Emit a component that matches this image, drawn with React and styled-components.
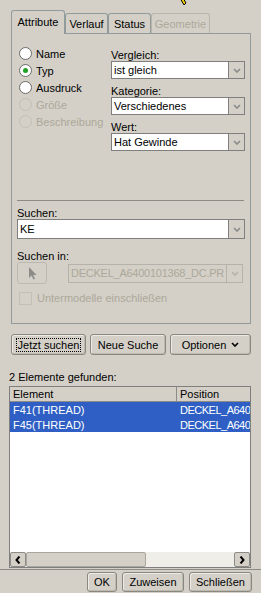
import React from 'react';
import styled, { createGlobalStyle } from 'styled-components';

const BG = '#d4d0c8';
const DIS = '#aca899';

const Global = createGlobalStyle`
  html, body { margin: 0; padding: 0; background: ${BG}; }
  body { font-family: "Liberation Sans", Arial, sans-serif; font-size: 11px; color: #000; }
  * { box-sizing: border-box; }
`;

const Window = styled.div`
  position: relative;
  width: 261px;
  height: 593px;
  background: ${BG};
  overflow: hidden;
  display: flex;
  flex-direction: column;
`;

const CursorMark = styled.svg`
  position: absolute;
  left: 179px;
  top: -2px;
`;

const TabStrip = styled.div`
  display: flex;
  align-items: flex-end;
  height: 23px;
  margin-top: 10px;
  padding-left: 11px;
  position: relative;
  z-index: 1;
`;

const Tab = styled.div`
  width: ${p => p.$w}px;
  height: ${p => (p.$active ? 24 : 20)}px;
  margin-bottom: ${p => (p.$active ? -1 : 0)}px;
  border: 1px solid ${p => (p.$disabled ? '#b9b6ad' : '#919b9c')};
  border-bottom: none;
  border-radius: 3px 3px 0 0;
  background: ${BG};
  color: ${p => (p.$disabled ? DIS : '#000')};
  display: flex;
  align-items: center;
  justify-content: center;
  padding-bottom: ${p => (p.$active ? 2 : 0)}px;
  white-space: nowrap;
`;

const TabPanel = styled.div`
  width: 240px;
  height: 291px;
  margin-left: 11px;
  border: 1px solid #919b9c;
  padding: 11px 5px 0 5px;
  display: flex;
  flex-direction: column;
`;

const TopSection = styled.div`
  display: grid;
  grid-template-columns: 94px 134px;
`;

const RadioList = styled.div`
  display: flex;
  flex-direction: column;
`;

const RadioRow = styled.label`
  height: 17px;
  display: flex;
  align-items: center;
  gap: 4px;
  padding-left: 2px;
  color: ${p => (p.$disabled ? DIS : '#000')};
`;

const RadioCircle = styled.span`
  width: 13px;
  height: 13px;
  border-radius: 50%;
  border: 1px solid ${p => (p.$disabled ? '#c2bfb6' : '#6b6b6b')};
  background: ${p => (p.$disabled ? 'transparent' : '#fff')};
  display: flex;
  align-items: center;
  justify-content: center;
  flex: none;
  &::after {
    content: '';
    display: ${p => (p.$checked ? 'block' : 'none')};
    width: 5px;
    height: 5px;
    border-radius: 50%;
    background: #21a121;
  }
`;

const FieldColumn = styled.div`
  display: flex;
  flex-direction: column;
  padding-top: 4px;
`;

const FieldLabel = styled.div`
  line-height: 12px;
  height: 12px;
  margin-top: ${p => p.$mt || 0}px;
  color: ${p => (p.$disabled ? DIS : '#000')};
  white-space: nowrap;
`;

const SelectBox = styled.div`
  display: flex;
  height: ${p => p.$h || 18}px;
  width: ${p => (p.$w ? `${p.$w}px` : '100%')};
  border: 1px solid ${p => (p.$disabled ? '#b5b2a9' : '#7f7f7f')};
  background: ${p => (p.$disabled ? BG : '#fff')};
  color: ${p => (p.$disabled ? DIS : '#000')};
  flex: none;
`;

const SelectText = styled.div`
  flex: 1;
  min-width: 0;
  padding-left: 2px;
  display: flex;
  align-items: center;
  white-space: nowrap;
  overflow: hidden;
  letter-spacing: ${p => (p.$tight ? '-0.25px' : 'normal')};
`;

const DropButton = styled.div`
  width: 16px;
  flex: none;
  border-left: 1px solid ${p => (p.$disabled ? '#b5b2a9' : '#7f7f7f')};
  background: ${BG};
  display: flex;
  align-items: center;
  justify-content: center;
`;

const Separator = styled.div`
  margin-top: ${p => p.$mt || 0}px;
  height: 1px;
  background: #8d8b85;
  width: ${p => (p.$w ? `${p.$w}px` : '100%')};
  flex: none;
`;

const PickRow = styled.div`
  display: flex;
  align-items: center;
  justify-content: space-between;
  height: 22px;
  padding-right: 2px;
`;

const PickButton = styled.div`
  width: 30px;
  height: 22px;
  border: 1px solid #bcb9b0;
  border-radius: 3px;
  display: flex;
  align-items: center;
  justify-content: center;
`;

const CheckRow = styled.label`
  display: flex;
  align-items: center;
  gap: 5px;
  height: 14px;
  margin-top: 7px;
  padding-left: 2px;
  color: ${DIS};
`;

const CheckBox = styled.span`
  width: 13px;
  height: 13px;
  border: 1px solid #c2bfb6;
  flex: none;
`;

const ButtonRow = styled.div`
  display: flex;
  gap: ${p => p.$gap || 4}px;
  margin-top: ${p => p.$mt || 0}px;
  padding-left: ${p => p.$pl || 0}px;
  padding-right: ${p => p.$pr || 0}px;
  justify-content: ${p => (p.$right ? 'flex-end' : 'flex-start')};
`;

const PushButton = styled.div`
  width: ${p => p.$w}px;
  height: ${p => p.$h || 21}px;
  border: 1px solid #8a877f;
  border-radius: 3px;
  background: ${BG};
  display: flex;
  align-items: center;
  justify-content: center;
  gap: 5px;
  white-space: nowrap;
  box-shadow: inset -1px -1px 0 #bdbab2, inset 1px 1px 0 #ecebe6;
`;

const FocusRing = styled.span`
  outline: 1px dotted #000;
  outline-offset: 0;
  padding: 0 1px;
  line-height: 12px;
`;

const FoundLabel = styled.div`
  margin-top: 16px;
  margin-left: 9px;
  line-height: 13px;
  height: 13px;
`;

const ListBox = styled.div`
  margin-top: 2px;
  margin-left: 9px;
  width: 242px;
  height: 182px;
  border: 1px solid #7f7f7f;
  background: #fff;
  display: flex;
  flex-direction: column;
  overflow: hidden;
`;

const ListRow = styled.div`
  display: grid;
  grid-template-columns: 167px 1fr;
  height: 15px;
  flex: none;
  background: ${p => (p.$header ? BG : p.$selected ? '#2f5fc4' : '#fff')};
  color: ${p => (p.$selected ? '#fff' : '#000')};
  border-bottom: ${p => (p.$header ? '1px solid #8d8b85' : 'none')};
`;

const Cell = styled.div`
  padding-left: 3px;
  display: flex;
  align-items: center;
  white-space: nowrap;
  overflow: hidden;
  letter-spacing: ${p => (p.$tight ? '-0.5px' : 'normal')};
  border-right: ${p => (p.$header ? '1px solid #8d8b85' : 'none')};
`;

const ListBody = styled.div`
  flex: 1;
`;

const ScrollBar = styled.div`
  height: 15px;
  display: flex;
  background: #efeee9;
  flex: none;
`;

const ScrollButton = styled.div`
  width: 16px;
  height: 15px;
  background: ${BG};
  border: 1px solid #8d8b85;
  border-radius: 2px;
  display: flex;
  align-items: center;
  justify-content: center;
  flex: none;
`;

const ScrollThumb = styled.div`
  width: 120px;
  height: 15px;
  background: ${BG};
  border: 1px solid #a9a69e;
  border-radius: 2px;
`;

const ScrollTrack = styled.div`
  flex: 1;
`;

const Chevron = ({ color = '#8a8a8a' }) => (
  <svg width="8" height="5" viewBox="0 0 8 5">
    <polyline points="1,1 4,4 7,1" fill="none" stroke={color} strokeWidth="1.6" />
  </svg>
);

const Select = ({ children, disabled, h, w, tight }) => (
  <SelectBox $disabled={disabled} $h={h} $w={w}>
    <SelectText $tight={tight}>{children}</SelectText>
    <DropButton $disabled={disabled}>
      <Chevron color={disabled ? '#b5b2a9' : '#8a8a8a'} />
    </DropButton>
  </SelectBox>
);

const Radio = ({ label, checked, disabled }) => (
  <RadioRow $disabled={disabled}>
    <RadioCircle $checked={checked} $disabled={disabled} />
    {label}
  </RadioRow>
);

const Arrow = ({ dir }) => (
  <svg width="6" height="8" viewBox="0 0 6 8">
    <polyline
      points={dir === 'left' ? '4.5,0.5 1.5,4 4.5,7.5' : '1.5,0.5 4.5,4 1.5,7.5'}
      fill="none"
      stroke="#000"
      strokeWidth="2"
    />
  </svg>
);

export default function App() {
  return (
    <Window>
      <Global />
      <CursorMark width="10" height="9" viewBox="0 0 10 9">
        <polygon points="1,0 4,0 7,5 5,7" fill="#f2d000" stroke="#000" strokeWidth="1" />
      </CursorMark>

      <TabStrip>
        <Tab $w={54} $active>Attribute</Tab>
        <Tab $w={43}>Verlauf</Tab>
        <Tab $w={43}>Status</Tab>
        <Tab $w={59} $disabled>Geometrie</Tab>
      </TabStrip>

      <TabPanel>
        <TopSection>
          <RadioList>
            <Radio label="Name" />
            <Radio label="Typ" checked />
            <Radio label="Ausdruck" />
            <Radio label="Größe" disabled />
            <Radio label="Beschreibung" disabled />
          </RadioList>
          <FieldColumn>
            <FieldLabel>Vergleich:</FieldLabel>
            <Select>ist gleich</Select>
            <FieldLabel $mt={6}>Kategorie:</FieldLabel>
            <Select>Verschiedenes</Select>
            <FieldLabel $mt={6}>Wert:</FieldLabel>
            <Select>Hat Gewinde</Select>
          </FieldColumn>
        </TopSection>

        <Separator $mt={49} $w={227} />

        <FieldLabel $mt={6}>Suchen:</FieldLabel>
        <Select h={20} w={228}>KE</Select>

        <FieldLabel $mt={11}>Suchen in:</FieldLabel>
        <PickRow>
          <PickButton>
            <svg width="9" height="13" viewBox="0 0 9 13">
              <path d="M1 0 L1 11 L3.5 8.5 L5.5 12.5 L7 11.8 L5 8 L8.5 8 Z" fill="#8d8b85" />
            </svg>
          </PickButton>
          <Select disabled tight h={19} w={175}>DECKEL_A6400101368_DC.PR</Select>
        </PickRow>

        <CheckRow>
          <CheckBox />
          Untermodelle einschließen
        </CheckRow>
      </TabPanel>

      <ButtonRow $mt={10} $pl={11} $gap={4}>
        <PushButton $w={75}>
          <FocusRing>Jetzt suchen</FocusRing>
        </PushButton>
        <PushButton $w={76}>Neue Suche</PushButton>
        <PushButton $w={81}>
          Optionen
          <Chevron color="#000" />
        </PushButton>
      </ButtonRow>

      <FoundLabel>2 Elemente gefunden:</FoundLabel>

      <ListBox>
        <ListRow $header>
          <Cell $header>Element</Cell>
          <Cell>Position</Cell>
        </ListRow>
        <ListRow $selected>
          <Cell>F41(THREAD)</Cell>
          <Cell $tight>DECKEL_A640</Cell>
        </ListRow>
        <ListRow $selected>
          <Cell>F45(THREAD)</Cell>
          <Cell $tight>DECKEL_A640</Cell>
        </ListRow>
        <ListBody />
        <ScrollBar>
          <ScrollButton><Arrow dir="left" /></ScrollButton>
          <ScrollThumb />
          <ScrollTrack />
          <ScrollButton><Arrow dir="right" /></ScrollButton>
        </ScrollBar>
      </ListBox>

      <Separator $mt={1} />

      <ButtonRow $mt={2} $pr={9} $right $gap={5}>
        <PushButton $w={30} $h={20}>OK</PushButton>
        <PushButton $w={62} $h={20}>Zuweisen</PushButton>
        <PushButton $w={63} $h={20}>Schließen</PushButton>
      </ButtonRow>
    </Window>
  );
}
